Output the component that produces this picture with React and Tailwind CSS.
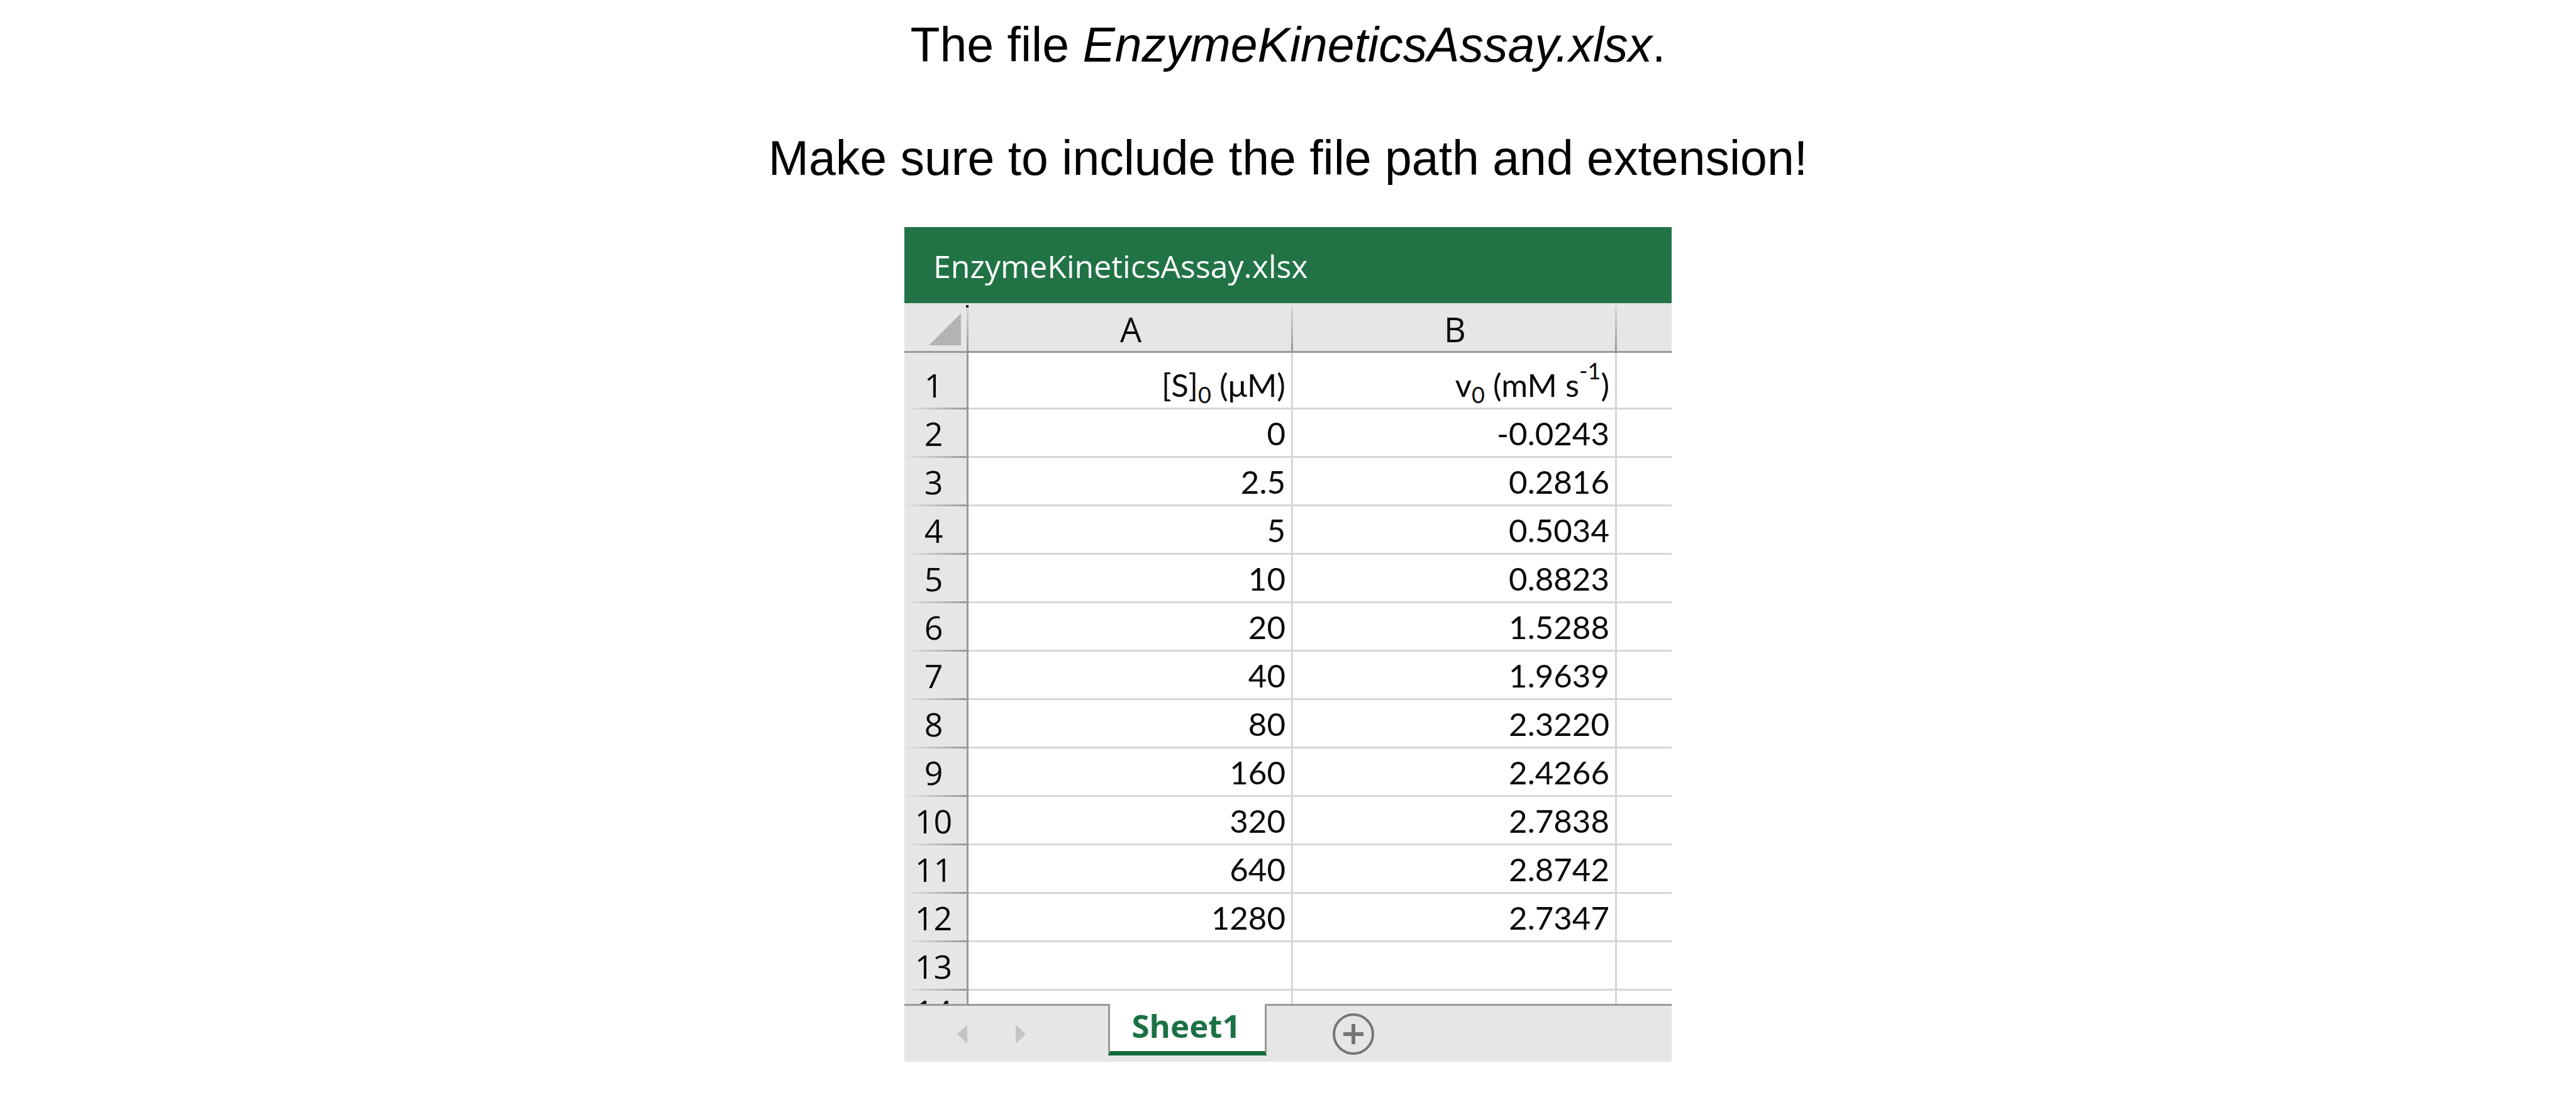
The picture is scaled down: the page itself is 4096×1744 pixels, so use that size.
import React from "react";

const rows = [
  ["2", "0", "-0.0243"],
  ["3", "2.5", "0.2816"],
  ["4", "5", "0.5034"],
  ["5", "10", "0.8823"],
  ["6", "20", "1.5288"],
  ["7", "40", "1.9639"],
  ["8", "80", "2.3220"],
  ["9", "160", "2.4266"],
  ["10", "320", "2.7838"],
  ["11", "640", "2.8742"],
  ["12", "1280", "2.7347"],
  ["13", "", ""],
  ["14", "", ""],
];

const columnHead =
  "h-[79px] border-b-[3px] border-[#999999] bg-[#e6e6e6] bg-[image:linear-gradient(to_bottom,#d8d8d8,#999999)] bg-[length:3px_72px] bg-right-bottom bg-no-repeat pb-[5px] align-bottom font-['Open_Sans',sans-serif] text-[54px] leading-[60px] font-normal";
const rowHead =
  "border-r-[3px] border-[#999999] bg-[#e6e6e6] bg-[image:linear-gradient(to_right,#e6e6e6,#999999)] bg-[length:100%_3px] bg-bottom bg-no-repeat pr-[6px] pb-[9px] text-center align-bottom font-['Open_Sans',sans-serif] text-[52px] leading-[60px] font-normal";
const cell =
  "border-r-[3px] border-b-[3px] border-[#d6d6d6] pr-[9px] pb-[6px] text-right align-bottom";
const lastCell = "border-b-[3px] border-[#d6d6d6]";

function Row({ label, a, b, tall }) {
  return (
    <tr className={tall ? "h-[90px]" : "h-[77px] last:h-[72px]"}>
      <th scope="row" className={rowHead}>{label}</th>
      <td className={cell}>{a}</td>
      <td className={cell}>{b}</td>
      <td className={lastCell}></td>
    </tr>
  );
}

function Sheet() {
  return (
    <div className="h-[1114px] overflow-hidden bg-white">
      <table className="w-full table-fixed border-separate border-spacing-0 font-[Lato,sans-serif] text-[51px] leading-[60px] text-[#0a0a0a]">
        <colgroup>
          <col className="w-[102px]" />
          <col className="w-[516px]" />
          <col className="w-[515px]" />
          <col />
        </colgroup>
        <thead>
          <tr>
            <td className="relative h-[79px] border-b-[3px] border-[#999999] bg-[#e6e6e6] bg-[image:linear-gradient(to_bottom,#d8d8d8,#999999)] bg-[length:3px_72px] bg-right-bottom bg-no-repeat p-0">
              <div className="flex h-[76px] justify-end pt-[16px] pr-[12px]">
                <svg viewBox="0 0 51 51" className="size-[51px]" aria-hidden="true">
                  <path d="M51 0V51H0Z" fill="#b3b3b3" />
                </svg>
              </div>
              <span className="absolute top-[3px] right-0 size-[4px] bg-[#111111]"></span>
            </td>
            <th scope="col" className={columnHead}>A</th>
            <th scope="col" className={columnHead}>B</th>
            <td className="border-b-[3px] border-[#999999] bg-[#e6e6e6]"></td>
          </tr>
        </thead>
        <tbody>
          <Row
            tall
            label="1"
            a={<>[S]<sub className="static align-[-10px] text-[36px]">0</sub> (μM)</>}
            b={<>v<sub className="static align-[-10px] text-[36px]">0</sub> (mM s<sup className="static align-[28px] text-[36px]">-1</sup>)</>}
          />
          {rows.map(([label, a, b]) => (
            <Row key={label} label={label} a={a} b={b} />
          ))}
        </tbody>
      </table>
    </div>
  );
}

function TabBar() {
  return (
    <div className="flex h-[92px] bg-[#e6e6e6]">
      <div className="flex w-[324px] items-center gap-[77px] border-t-[3px] border-[#999999] pl-[84px]">
        <button type="button" aria-label="Previous sheet">
          <svg viewBox="0 0 16 30" className="h-[30px] w-[16px]"><path d="M16 0V30L0 15Z" fill="#c4c4c4" /></svg>
        </button>
        <button type="button" aria-label="Next sheet">
          <svg viewBox="0 0 16 30" className="h-[30px] w-[16px]"><path d="M0 0V30L16 15Z" fill="#c4c4c4" /></svg>
        </button>
      </div>
      <button
        type="button"
        className="mb-[10px] w-[252px] border-x-[3px] border-b-[7px] border-x-[#999999] border-b-[#0f6b38] bg-white pr-[4px] pb-[7px] font-['Open_Sans',sans-serif] text-[51px] leading-[60px] font-bold text-[#1b7144]"
      >
        Sheet1
      </button>
      <div className="flex flex-1 items-center border-t-[3px] border-[#999999] pl-[105px]">
        <button type="button" aria-label="New sheet">
          <svg viewBox="0 0 66 66" className="size-[66px]" fill="none" stroke="#757575">
            <circle cx="33" cy="33" r="31" strokeWidth="4" />
            <path d="M33 17V49M17 33H49" strokeWidth="6" />
          </svg>
        </button>
      </div>
    </div>
  );
}

export default function App() {
  return (
    <main className="flex min-h-screen flex-col items-center bg-white pt-[26px] pb-14">
      <div className="text-center font-['Liberation_Sans',Arial,sans-serif] text-[77px] leading-[90px] text-black">
        <p>The file <em>EnzymeKineticsAssay.xlsx</em>.</p>
        <p className="mt-[90px]">Make sure to include the file path and extension!</p>
      </div>
      <section className="mt-[65px] w-full max-w-[1220px]">
        <h1 className="flex h-[121px] items-center bg-[#217346] pt-[4px] pl-[46px] font-['Open_Sans',sans-serif] text-[50px] text-white">
          EnzymeKineticsAssay.xlsx
        </h1>
        <Sheet />
        <TabBar />
      </section>
    </main>
  );
}
